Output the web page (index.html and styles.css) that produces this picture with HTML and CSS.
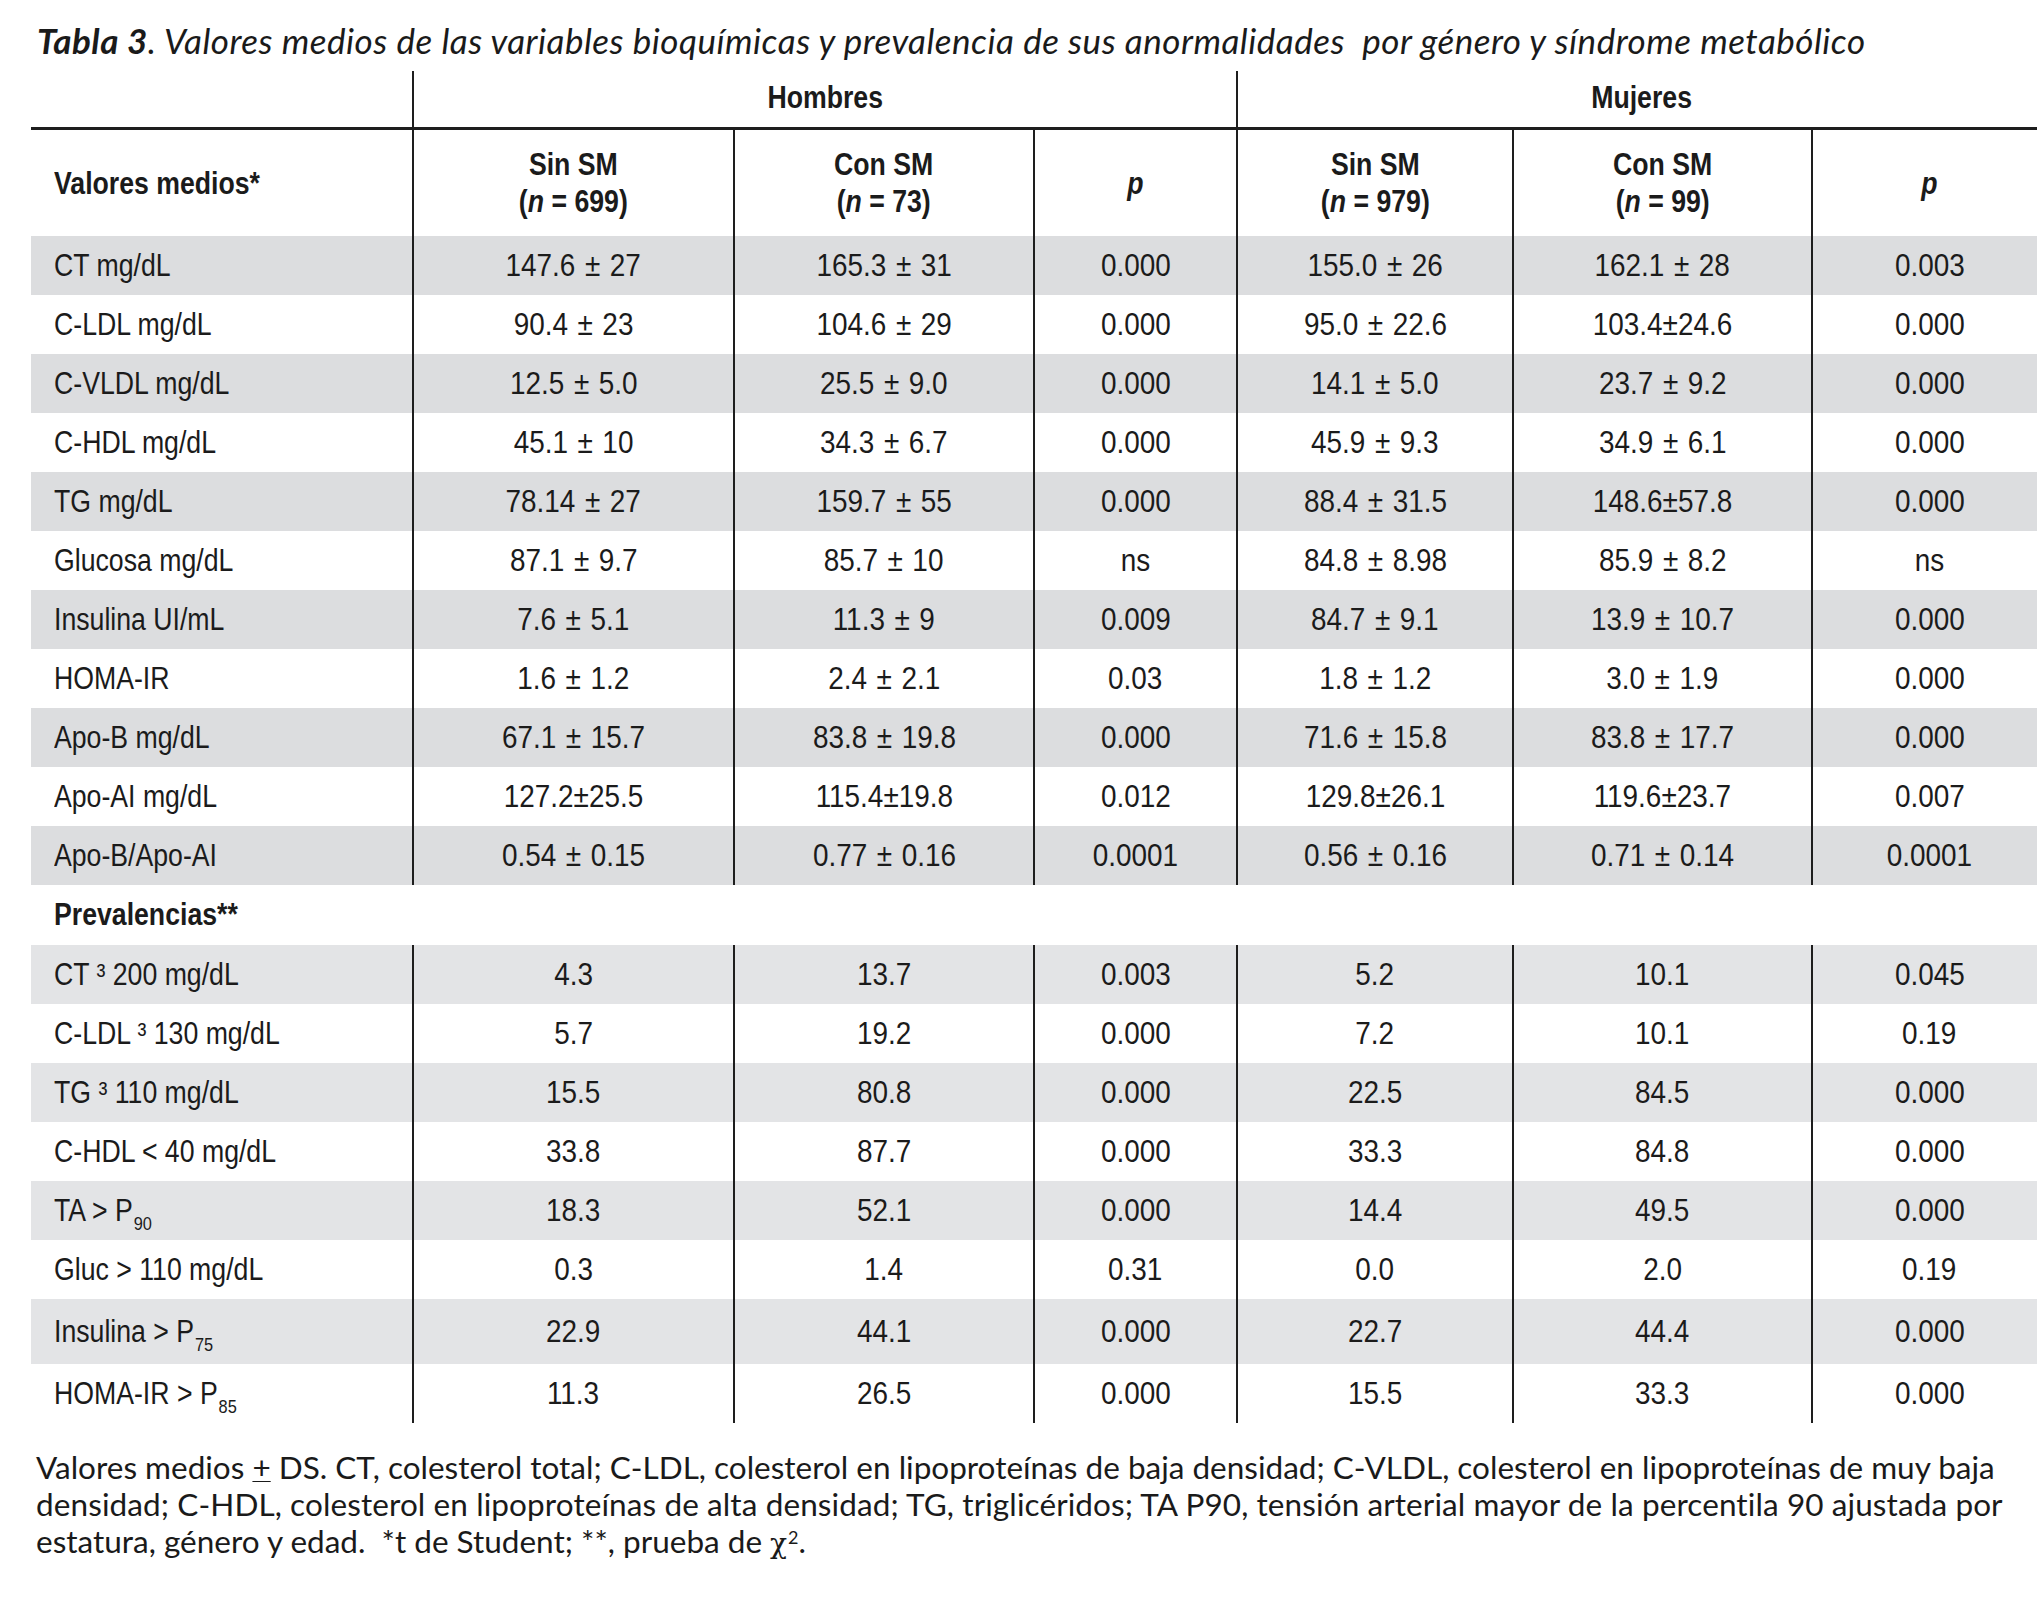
FILE: index.html
```html
<!DOCTYPE html>
<html lang="es">
<head>
<meta charset="utf-8">
<title>Tabla 3</title>
<link rel="stylesheet" href="styles.css">
</head>
<body>
<div class="page">
  <div class="title"><b>Tabla 3</b>. Valores medios de las variables bioquímicas y prevalencia de sus anormalidades &nbsp;por género y síndrome metabólico</div>
  <table class="tbl">
    <colgroup>
      <col class="c0"><col class="c1"><col class="c2"><col class="c3"><col class="c4"><col class="c5"><col class="c6">
    </colgroup>
    <thead>
      <tr class="h1">
        <th class="lab"></th>
        <th colspan="3" class="vl"><span class="t">Hombres</span></th>
        <th colspan="3" class="vl"><span class="t">Mujeres</span></th>
      </tr>
      <tr class="h2">
        <th class="lab"><span class="t">Valores medios*</span></th>
        <th class="vl"><span class="t">Sin SM<br>(<i>n</i> = 699)</span></th>
        <th class="vl"><span class="t">Con SM<br>(<i>n</i> = 73)</span></th>
        <th class="vl"><span class="t"><i>p</i></span></th>
        <th class="vl"><span class="t">Sin SM<br>(<i>n</i> = 979)</span></th>
        <th class="vl"><span class="t">Con SM<br>(<i>n</i> = 99)</span></th>
        <th class="vl"><span class="t"><i>p</i></span></th>
      </tr>
    </thead>
    <tbody>
      <tr class="g"><td class="lab"><span class="t">CT mg/dL</span></td><td class="vl"><span class="t">147.6 ± 27</span></td><td class="vl"><span class="t">165.3 ± 31</span></td><td class="vl"><span class="t">0.000</span></td><td class="vl"><span class="t">155.0 ± 26</span></td><td class="vl"><span class="t">162.1 ± 28</span></td><td class="vl"><span class="t">0.003</span></td></tr>
      <tr><td class="lab"><span class="t">C-LDL mg/dL</span></td><td class="vl"><span class="t">90.4 ± 23</span></td><td class="vl"><span class="t">104.6 ± 29</span></td><td class="vl"><span class="t">0.000</span></td><td class="vl"><span class="t">95.0 ± 22.6</span></td><td class="vl"><span class="t">103.4±24.6</span></td><td class="vl"><span class="t">0.000</span></td></tr>
      <tr class="g"><td class="lab"><span class="t">C-VLDL mg/dL</span></td><td class="vl"><span class="t">12.5 ± 5.0</span></td><td class="vl"><span class="t">25.5 ± 9.0</span></td><td class="vl"><span class="t">0.000</span></td><td class="vl"><span class="t">14.1 ± 5.0</span></td><td class="vl"><span class="t">23.7 ± 9.2</span></td><td class="vl"><span class="t">0.000</span></td></tr>
      <tr><td class="lab"><span class="t">C-HDL mg/dL</span></td><td class="vl"><span class="t">45.1 ± 10</span></td><td class="vl"><span class="t">34.3 ± 6.7</span></td><td class="vl"><span class="t">0.000</span></td><td class="vl"><span class="t">45.9 ± 9.3</span></td><td class="vl"><span class="t">34.9 ± 6.1</span></td><td class="vl"><span class="t">0.000</span></td></tr>
      <tr class="g"><td class="lab"><span class="t">TG mg/dL</span></td><td class="vl"><span class="t">78.14 ± 27</span></td><td class="vl"><span class="t">159.7 ± 55</span></td><td class="vl"><span class="t">0.000</span></td><td class="vl"><span class="t">88.4 ± 31.5</span></td><td class="vl"><span class="t">148.6±57.8</span></td><td class="vl"><span class="t">0.000</span></td></tr>
      <tr><td class="lab"><span class="t">Glucosa mg/dL</span></td><td class="vl"><span class="t">87.1 ± 9.7</span></td><td class="vl"><span class="t">85.7 ± 10</span></td><td class="vl"><span class="t">ns</span></td><td class="vl"><span class="t">84.8 ± 8.98</span></td><td class="vl"><span class="t">85.9 ± 8.2</span></td><td class="vl"><span class="t">ns</span></td></tr>
      <tr class="g"><td class="lab"><span class="t">Insulina UI/mL</span></td><td class="vl"><span class="t">7.6 ± 5.1</span></td><td class="vl"><span class="t">11.3 ± 9</span></td><td class="vl"><span class="t">0.009</span></td><td class="vl"><span class="t">84.7 ± 9.1</span></td><td class="vl"><span class="t">13.9 ± 10.7</span></td><td class="vl"><span class="t">0.000</span></td></tr>
      <tr><td class="lab"><span class="t">HOMA-IR</span></td><td class="vl"><span class="t">1.6 ± 1.2</span></td><td class="vl"><span class="t">2.4 ± 2.1</span></td><td class="vl"><span class="t">0.03</span></td><td class="vl"><span class="t">1.8 ± 1.2</span></td><td class="vl"><span class="t">3.0 ± 1.9</span></td><td class="vl"><span class="t">0.000</span></td></tr>
      <tr class="g"><td class="lab"><span class="t">Apo-B mg/dL</span></td><td class="vl"><span class="t">67.1 ± 15.7</span></td><td class="vl"><span class="t">83.8 ± 19.8</span></td><td class="vl"><span class="t">0.000</span></td><td class="vl"><span class="t">71.6 ± 15.8</span></td><td class="vl"><span class="t">83.8 ± 17.7</span></td><td class="vl"><span class="t">0.000</span></td></tr>
      <tr><td class="lab"><span class="t">Apo-AI mg/dL</span></td><td class="vl"><span class="t">127.2±25.5</span></td><td class="vl"><span class="t">115.4±19.8</span></td><td class="vl"><span class="t">0.012</span></td><td class="vl"><span class="t">129.8±26.1</span></td><td class="vl"><span class="t">119.6±23.7</span></td><td class="vl"><span class="t">0.007</span></td></tr>
      <tr class="g"><td class="lab"><span class="t">Apo-B/Apo-AI</span></td><td class="vl"><span class="t">0.54 ± 0.15</span></td><td class="vl"><span class="t">0.77 ± 0.16</span></td><td class="vl"><span class="t">0.0001</span></td><td class="vl"><span class="t">0.56 ± 0.16</span></td><td class="vl"><span class="t">0.71 ± 0.14</span></td><td class="vl"><span class="t">0.0001</span></td></tr>
      <tr class="sec"><td class="lab" colspan="7"><span class="t">Prevalencias**</span></td></tr>
      <tr class="g2"><td class="lab"><span class="t">CT ³ 200 mg/dL</span></td><td class="vl"><span class="t">4.3</span></td><td class="vl"><span class="t">13.7</span></td><td class="vl"><span class="t">0.003</span></td><td class="vl"><span class="t">5.2</span></td><td class="vl"><span class="t">10.1</span></td><td class="vl"><span class="t">0.045</span></td></tr>
      <tr><td class="lab"><span class="t">C-LDL ³ 130 mg/dL</span></td><td class="vl"><span class="t">5.7</span></td><td class="vl"><span class="t">19.2</span></td><td class="vl"><span class="t">0.000</span></td><td class="vl"><span class="t">7.2</span></td><td class="vl"><span class="t">10.1</span></td><td class="vl"><span class="t">0.19</span></td></tr>
      <tr class="g2"><td class="lab"><span class="t">TG ³ 110 mg/dL</span></td><td class="vl"><span class="t">15.5</span></td><td class="vl"><span class="t">80.8</span></td><td class="vl"><span class="t">0.000</span></td><td class="vl"><span class="t">22.5</span></td><td class="vl"><span class="t">84.5</span></td><td class="vl"><span class="t">0.000</span></td></tr>
      <tr><td class="lab"><span class="t">C-HDL &lt; 40 mg/dL</span></td><td class="vl"><span class="t">33.8</span></td><td class="vl"><span class="t">87.7</span></td><td class="vl"><span class="t">0.000</span></td><td class="vl"><span class="t">33.3</span></td><td class="vl"><span class="t">84.8</span></td><td class="vl"><span class="t">0.000</span></td></tr>
      <tr class="g2"><td class="lab"><span class="t">TA &gt; P<span class="sb">90</span></span></td><td class="vl"><span class="t">18.3</span></td><td class="vl"><span class="t">52.1</span></td><td class="vl"><span class="t">0.000</span></td><td class="vl"><span class="t">14.4</span></td><td class="vl"><span class="t">49.5</span></td><td class="vl"><span class="t">0.000</span></td></tr>
      <tr><td class="lab"><span class="t">Gluc &gt; 110 mg/dL</span></td><td class="vl"><span class="t">0.3</span></td><td class="vl"><span class="t">1.4</span></td><td class="vl"><span class="t">0.31</span></td><td class="vl"><span class="t">0.0</span></td><td class="vl"><span class="t">2.0</span></td><td class="vl"><span class="t">0.19</span></td></tr>
      <tr class="g2 tall"><td class="lab"><span class="t">Insulina &gt; P<span class="sb">75</span></span></td><td class="vl"><span class="t">22.9</span></td><td class="vl"><span class="t">44.1</span></td><td class="vl"><span class="t">0.000</span></td><td class="vl"><span class="t">22.7</span></td><td class="vl"><span class="t">44.4</span></td><td class="vl"><span class="t">0.000</span></td></tr>
      <tr class="last"><td class="lab"><span class="t">HOMA-IR &gt; P<span class="sb">85</span></span></td><td class="vl"><span class="t">11.3</span></td><td class="vl"><span class="t">26.5</span></td><td class="vl"><span class="t">0.000</span></td><td class="vl"><span class="t">15.5</span></td><td class="vl"><span class="t">33.3</span></td><td class="vl"><span class="t">0.000</span></td></tr>
    </tbody>
  </table>
  <div class="note">
    <div class="ln">Valores medios <u>+</u> DS. CT, colesterol total; C-LDL, colesterol en lipoproteínas de baja densidad; C-VLDL, colesterol en lipoproteínas de muy baja</div>
    <div class="ln">densidad; C-HDL, colesterol en lipoproteínas de alta densidad; TG, triglicéridos; TA P90, tensión arterial mayor de la percentila 90 ajustada por</div>
    <div class="ln">estatura, género y edad. &nbsp;*t de Student; **, prueba de <span class="chi">χ</span><span class="sq">2</span>.</div>
  </div>
</div>
</body>
</html>
```

FILE: styles.css
```css
html, body {
  margin: 0;
  padding: 0;
  background: #ffffff;
}
body {
  width: 2037px;
  height: 1600px;
  overflow: hidden;
  color: #1b1b1b;
}
.page {
  padding-left: 31px;
}
.title {
  box-sizing: border-box;
  height: 71px;
  padding-top: 18px;
  padding-left: 6px;
  font-family: "Lato", "Open Sans", sans-serif;
  font-style: italic;
  font-size: 35px;
  letter-spacing: 0.5px;
  line-height: 44px;
  white-space: nowrap;
  color: #1a1a1a;
}
.title b {
  font-weight: 700;
}
.tbl {
  width: 2015px;
  table-layout: fixed;
  border-collapse: collapse;
  border-spacing: 0;
  font-family: "Liberation Sans", Arial, sans-serif;
  font-size: 31px;
  color: #1b1b1b;
}
.c0 { width: 382px; }
.c1 { width: 321px; }
.c2 { width: 300px; }
.c3 { width: 203px; }
.c4 { width: 276px; }
.c5 { width: 299px; }
.c6 { width: 234px; }
.tbl th, .tbl td {
  padding: 0;
  text-align: center;
  vertical-align: middle;
  white-space: nowrap;
  overflow: visible;
}
.t {
  display: inline-block;
  transform: scaleX(0.86);
  transform-origin: 50% 50%;
}
.tbl tbody .vl .t {
  transform: scaleX(0.9);
  word-spacing: 2px;
}
.tbl .lab .t {
  transform-origin: 0 50%;
}
.tbl th {
  font-weight: 700;
}
.tbl th i {
  font-weight: 700;
}
.tbl .lab {
  text-align: left;
  padding-left: 23px;
}
.tbl .vl {
  border-left: 2px solid #1e1e1e;
}
.h1 th {
  height: 54px;
  border-bottom: 3px solid #1e1e1e;
  line-height: 40px;
  padding-bottom: 2px;
}
.h2 th {
  height: 106px;
  line-height: 37px;
}
.tbl tbody td {
  height: 59px;
  line-height: 36px;
}
.tbl tr.g td {
  background: #dcdddf;
}
.tbl tr.g2 td {
  background: #e3e4e6;
}
.tbl tr.sec td {
  height: 60px;
  font-weight: 700;
}
.tbl tr.tall td {
  height: 65px;
}
.tbl tr.last td {
  height: 59px;
}
.sb {
  font-size: 19px;
  line-height: 0;
  vertical-align: -0.5em;
  margin-left: 1px;
}
.note {
  padding-top: 26px;
  padding-left: 5px;
  font-family: "Lato", "Open Sans", sans-serif;
  font-size: 31.5px;
  line-height: 37px;
  white-space: nowrap;
  color: #1a1a1a;
}
.note .ln:nth-child(2) {
  letter-spacing: 0.1px;
}
.note u {
  text-decoration-thickness: 1px;
  text-underline-offset: 2px;
}
.chi {
  font-family: "DejaVu Serif", "Liberation Serif", serif;
  font-size: 28px;
  line-height: 0;
}
.sq {
  font-size: 18px;
  line-height: 0;
  vertical-align: 9px;
  margin-left: 1px;
}
```
